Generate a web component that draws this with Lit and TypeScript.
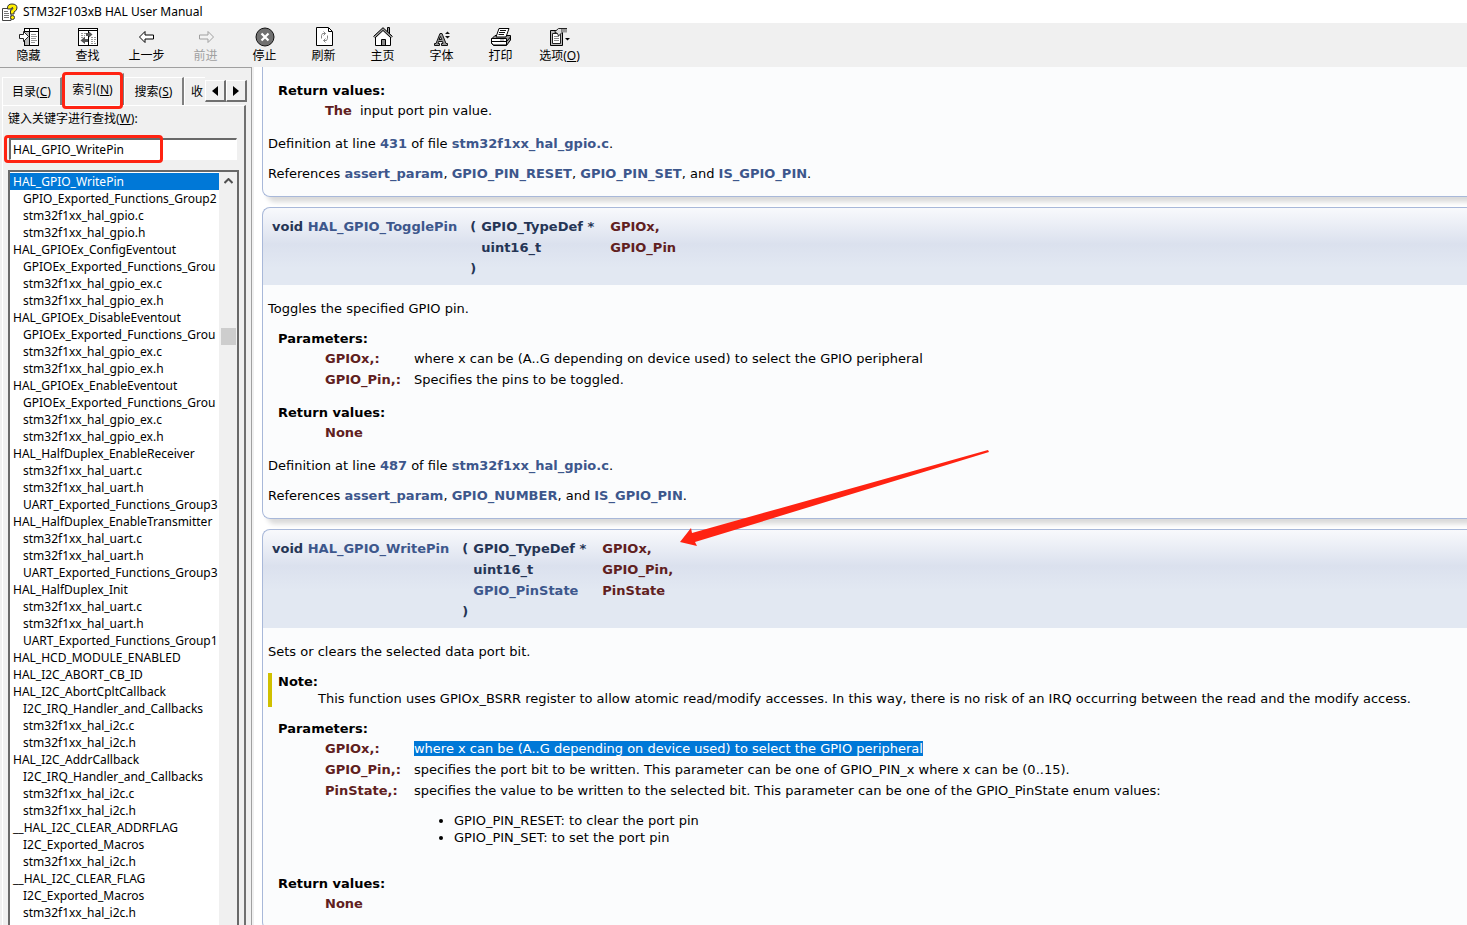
import { LitElement, html, css, svg } from "lit";
import { customElement, state } from "lit/decorators.js";

const hideIcon = svg`<rect x="5.500" y="1.500" width="14" height="17" fill="#fff" stroke="#000"/><rect x="6" y="5" width="4" height="13" fill="#bbb"/><path d="M10.500 2V18M6 4.500H19" stroke="#000"/><path d="M12 7.500H17M12 9.500H18M12 11.500H17M12 13.500H18M12 15.500H16" stroke="#999"/><path d="M0.500 7.500H4.500V4.500L9.500 9.500L4.500 14.500V11.500H0.500Z" fill="#fff" stroke="#222"/>`;
const findIcon = svg`<rect x=".5" y="1.500" width="19" height="17" fill="#fff" stroke="#000"/><path d="M1 3.500H19M10.500 4V18" stroke="#000"/><path d="M3 6.500H8M3 8.500H7M3 10.500H7M13 10.500H18M13 12.500H18M13 14.500H17M13 16.500H18" stroke="#999" stroke-dasharray="2 1"/><path d="M8 6H11V4.500L14.500 7.500L11 10.500V9H8Z" fill="#555"/><path d="M10 12H7V9.500L2.500 13.500L7 17V15H10Z" fill="#555"/>`;
const backIcon = svg`<path d="M16.500 8H8V4.500L2.500 10L8 15.500V12H16.500Z" fill="#fff" stroke="#000"/>`;
const forwardIcon = svg`<path d="M3.500 8H12V4.500L17.500 10L12 15.500V12H3.500Z" fill="#f3f3f3" stroke="#a0a0a0"/>`;
const stopIcon = svg`<circle cx="10" cy="10" r="9" fill="#707070" stroke="#111"/><path d="M6.500 6.500L13.500 13.500M13.500 6.500L6.500 13.500" stroke="#fff" stroke-width="2.200"/>`;
const refreshIcon = svg`<path d="M2.500 .5H14.500L18.500 4.500V18.500H2.500Z" fill="#fff" stroke="#000"/><path d="M14.500 1V4.500H18" fill="none" stroke="#000"/><path d="M7.500 11.500V8.500L8.500 6.500H11.500M9.500 4.500L11.500 6.500L9.500 8.500M13.500 8.500V11.500L12.500 13.500H9.500M11.500 11.500L9.500 13.500L11.500 15.500" fill="none" stroke="#888"/>`;
const homeIcon = svg`<path d="M14.500 6V.5H16.500V8" fill="#999" stroke="#000"/><path d="M2.500 10V18.500H17.500V10L10 3Z" fill="#fff" stroke="#000"/><path d="M1 10.500L10 2L19 10.500" fill="none" stroke="#999" stroke-width="2"/><path d="M.5 9.500L10 .7L19.500 9.500M2 11L10 3.500L18 11" fill="none" stroke="#000"/><path d="M8.500 18V12.500H12.500V18" fill="#888" stroke="#000"/>`;
const fontIcon = svg`<path d="M2.500 18.500V16.500H4L8 6.500H10L14 16.500H15.500V18.500H9.500V16.500H11L10.500 14.500H6.500L6 16.500H7.500V18.500ZM7 12.500H9.700L8.500 9.500Z" fill="#999" stroke="#111" fill-rule="evenodd"/><path d="M13 7L15.500 4.500L18 7ZM13 9L15.500 11.500L18 9Z" fill="#111"/>`;
const printIcon = svg`<path d="M.5 12L4 8.500H19.500V13L15.500 18.500H2.500L.5 16.500Z" fill="#999" stroke="#000"/><path d="M5 10L8 1.500H18L15 10Z" fill="#fff" stroke="#000"/><path d="M9 3.500H15M8 5.500H14M7.500 7.500H13" stroke="#111"/><path d="M.5 11.500H15.500V18H2.500L.5 16Z" fill="#fff" stroke="#000"/><path d="M1 14.500H15.500L19.500 10" fill="none" stroke="#000"/><path d="M9 13H13" stroke="#888"/>`;
const optionsIcon = svg`<path d="M.5 3.500H12.500V18.500H.5Z" fill="#bbb" stroke="#000"/><path d="M2.500 6.500H10.500V16.500H2.500Z" fill="#fff" stroke="#222"/><path d="M4 9.500H9M4 11.500H9M4 13.500H9" stroke="#888"/><path d="M4.500 5L8.500 1.500H12V5.500L8.500 9L7.500 6.500Z" fill="#ddd" stroke="#222"/><path d="M12 1H17V5.500H12Z" fill="#999"/><path d="M12 1.500H17" stroke="#222"/><path d="M15 11H20L17.500 13.500Z" fill="#000"/>`;

const TOOLS = [
  { label: "隐藏", icon: hideIcon },
  { label: "查找", icon: findIcon },
  { label: "上一步", icon: backIcon },
  { label: "前进", icon: forwardIcon, disabled: true },
  { label: "停止", icon: stopIcon },
  { label: "刷新", icon: refreshIcon },
  { label: "主页", icon: homeIcon },
  { label: "字体", icon: fontIcon },
  { label: "打印", icon: printIcon },
  { label: "选项", icon: optionsIcon, key: "O" },
];

// Leading ">" marks a topic nested below its keyword.
const INDEX = `HAL_GPIO_WritePin
>GPIO_Exported_Functions_Group2
>stm32f1xx_hal_gpio.c
>stm32f1xx_hal_gpio.h
HAL_GPIOEx_ConfigEventout
>GPIOEx_Exported_Functions_Grou
>stm32f1xx_hal_gpio_ex.c
>stm32f1xx_hal_gpio_ex.h
HAL_GPIOEx_DisableEventout
>GPIOEx_Exported_Functions_Grou
>stm32f1xx_hal_gpio_ex.c
>stm32f1xx_hal_gpio_ex.h
HAL_GPIOEx_EnableEventout
>GPIOEx_Exported_Functions_Grou
>stm32f1xx_hal_gpio_ex.c
>stm32f1xx_hal_gpio_ex.h
HAL_HalfDuplex_EnableReceiver
>stm32f1xx_hal_uart.c
>stm32f1xx_hal_uart.h
>UART_Exported_Functions_Group3
HAL_HalfDuplex_EnableTransmitter
>stm32f1xx_hal_uart.c
>stm32f1xx_hal_uart.h
>UART_Exported_Functions_Group3
HAL_HalfDuplex_Init
>stm32f1xx_hal_uart.c
>stm32f1xx_hal_uart.h
>UART_Exported_Functions_Group1
HAL_HCD_MODULE_ENABLED
HAL_I2C_ABORT_CB_ID
HAL_I2C_AbortCpltCallback
>I2C_IRQ_Handler_and_Callbacks
>stm32f1xx_hal_i2c.c
>stm32f1xx_hal_i2c.h
HAL_I2C_AddrCallback
>I2C_IRQ_Handler_and_Callbacks
>stm32f1xx_hal_i2c.c
>stm32f1xx_hal_i2c.h
__HAL_I2C_CLEAR_ADDRFLAG
>I2C_Exported_Macros
>stm32f1xx_hal_i2c.h
__HAL_I2C_CLEAR_FLAG
>I2C_Exported_Macros
>stm32f1xx_hal_i2c.h`.split("\n");

@customElement("index-pane")
export class IndexPane extends LitElement {
  @state() private selected = 0;

  static styles = css`
    :host { display: flex; flex-direction: column; min-height: 0; position: relative; font: 12px/17px "Noto Sans", "Noto Sans CJK SC", sans-serif; color: #000; background: #f0f0f0; border-top: 1px solid #a0a0a0; border-right: 1px solid #a0a0a0; padding: 3px 4px 0 2px; box-sizing: border-box; }
    button, input { font: inherit; color: inherit; margin: 0; border-radius: 0; }
    .tabs { display: flex; height: 34px; align-items: flex-end; flex: none; }
    .tab { flex: none; height: 28px; background: #f0f0f0; border: 1px solid #fff; border-right: 2px solid #808080; border-bottom: 0; padding: 0; width: 60px; white-space: nowrap; overflow: hidden; }
    .tab.on { height: 32px; width: 62px; }
    .tab.cut { flex: 1; min-width: 0; width: auto; text-align: left; padding-left: 6px; border-right: 0; }
    .arrow { flex: none; width: 21px; height: 22px; margin-bottom: 3px; padding: 0; background: #f0f0f0; border: 1px solid #fff; border-right: 2px solid #707070; border-bottom: 2px solid #707070; display: grid; place-items: center; }
    .page { flex: 1; min-height: 0; display: flex; flex-direction: column; border-top: 1px solid #fff; border-left: 1px solid #fff; border-right: 2px solid #707070; margin-right: 1px; padding: 4px 5px 0; }
    .label { height: 17px; white-space: nowrap; }
    .query { height: 22px; margin: 11px 2px 10px 1px; border: 1px solid #fff; border-top: 2px solid #696969; border-left: 2px solid #696969; padding: 0 2px; background: #fff; outline: 0; box-sizing: border-box; flex: none; }
    .box { flex: 1; min-height: 0; display: flex; border: 2px solid #696969; border-bottom: 0; background: #fff; overflow: hidden; }
    .list { flex: 1; min-width: 0; margin: 0; padding: 1px 0 0; list-style: none; overflow: hidden; }
    .item { display: block; width: 100%; height: 17px; border: 0; background: none; padding: 0 0 0 3px; text-align: left; white-space: nowrap; overflow: hidden; }
    .item.sub { padding-left: 13px; }
    .item.on { background: #0078d7; color: #fff; }
    .bar { width: 18px; flex: none; background: #f0f0f0; display: flex; flex-direction: column; align-items: center; }
    .up { width: 17px; height: 17px; border: 0; background: none; padding: 0; display: grid; place-items: center; }
    .thumb { width: 15px; height: 17px; background: #cdcdcd; margin-top: 139px; }
    .mark { position: absolute; box-sizing: border-box; border: 3px solid #ff2312; border-radius: 4px; pointer-events: none; }
    .mark.tabmark { left: 62px; top: 4px; width: 61px; height: 37px; }
    .mark.textmark { left: 4px; top: 67px; width: 159px; height: 28px; }
  `;

  render() {
    return html`
      <div class="tabs" role="tablist">
        <button class="tab" role="tab">目录(<u>C</u>)</button>
        <button class="tab on" role="tab" aria-selected="true">索引(<u>N</u>)</button>
        <button class="tab" role="tab">搜索(<u>S</u>)</button>
        <button class="tab cut" role="tab">收</button>
        <button class="arrow" aria-label="Previous tabs"><svg width="6" height="10"><path d="M6 0V10L0 5Z" /></svg></button>
        <button class="arrow" aria-label="Next tabs"><svg width="6" height="10"><path d="M0 0V10L6 5Z" /></svg></button>
      </div>
      <div class="page">
        <label class="label" for="query">键入关键字进行查找(<u>W</u>):</label>
        <input class="query" id="query" type="text" value="HAL_GPIO_WritePin" />
        <div class="box">
          <ul class="list">
            ${INDEX.map((name, i) => html`<li><button class="item ${name[0] === ">" ? "sub" : ""} ${i === this.selected ? "on" : ""}" @click=${() => (this.selected = i)}>${name.replace(">", "")}</button></li>`)}
          </ul>
          <div class="bar">
            <button class="up" aria-label="Scroll up"><svg width="9" height="6"><path d="M.5 5L4.500 1L8.500 5" fill="none" stroke="#505050" stroke-width="2" /></svg></button>
            <div class="thumb"></div>
          </div>
        </div>
      </div>
      <div class="mark tabmark"></div>
      <div class="mark textmark"></div>
    `;
  }
}

@customElement("manual-page")
export class ManualPage extends LitElement {
  static styles = css`
    :host { display: block; position: relative; overflow: hidden; background: #fff; font: 13px/17px Verdana, "DejaVu Sans", sans-serif; color: #000; border-left: 2px solid #f0f0f0; padding-left: 8px; }
    a { color: #3d578c; font-weight: bold; text-decoration: none; }
    p { margin: 0 0 13px; }
    .entry { margin-bottom: 10px; border-radius: 8px 0 0 8px; box-shadow: 5px 5px 5px rgba(0, 0, 0, 0.15); }
    .proto { border: 1px solid #a8b8d9; border-right: 0; border-bottom: 0; border-radius: 8px 0 0 0; background: linear-gradient(#f8f9fc 0, #dbe1ee 36px, #e2e8f2 60px); color: #253555; font-weight: bold; padding: 8px 9px 6px; }
    .sig { border-collapse: collapse; }
    .sig td { padding: 0; height: 21px; white-space: nowrap; }
    .sig .func { padding-right: 13px; }
    .sig .paren { padding-right: 5px; }
    .sig .type { padding-right: 16px; }
    .arg, .name { color: #602020; font-weight: bold; }
    .doc { border-left: 1px solid #a8b8d9; border-bottom: 1px solid #a8b8d9; border-radius: 0 0 0 8px; background: #fbfcfd; padding: 15px 5px 1px; }
    dl { margin: 0 0 12px; padding-left: 10px; }
    dt { font-weight: bold; }
    dd { margin: 0 0 0 47px; }
    .note { border-left: 4px solid #d0c000; padding-left: 6px; margin-bottom: 13px; }
    .note dd { margin-left: 40px; }
    .params { border-collapse: collapse; margin-top: 3px; }
    .params td { padding: 0 8px 4px 0; vertical-align: top; white-space: nowrap; }
    .params.wide .name { padding-right: 13px; }
    .picked { background: #0078d7; color: #fff; }
    .values { margin: 13px 0; padding-left: 40px; }
    .arrow { position: absolute; left: 424px; top: 380px; pointer-events: none; }
    .first { border-radius: 0 0 0 8px; }
    .last { margin-bottom: 0; }
  `;

  render() {
    return html`
      <section class="entry first">
        <div class="doc">
          <dl>
            <dt>Return values:</dt>
            <dd><table class="params"><tr><td class="name">The</td><td>input port pin value.</td></tr></table></dd>
          </dl>
          <p>Definition at line <a href="#l431">431</a> of file <a href="#src">stm32f1xx_hal_gpio.c</a>.</p>
          <p>References <a href="#a">assert_param</a>, <a href="#b">GPIO_PIN_RESET</a>, <a href="#c">GPIO_PIN_SET</a>, and <a href="#d">IS_GPIO_PIN</a>.</p>
        </div>
      </section>
      <section class="entry">
        <div class="proto">
          <table class="sig">
            <tr><td class="func">void <a href="#toggle">HAL_GPIO_TogglePin</a></td><td class="paren">(</td><td class="type">GPIO_TypeDef *</td><td class="arg">GPIOx,</td></tr>
            <tr><td></td><td></td><td class="type">uint16_t</td><td class="arg">GPIO_Pin</td></tr>
            <tr><td></td><td>)</td><td></td><td></td></tr>
          </table>
        </div>
        <div class="doc">
          <p>Toggles the specified GPIO pin.</p>
          <dl>
            <dt>Parameters:</dt>
            <dd><table class="params wide">
              <tr><td class="name">GPIOx,:</td><td>where x can be (A..G depending on device used) to select the GPIO peripheral</td></tr>
              <tr><td class="name">GPIO_Pin,:</td><td>Specifies the pins to be toggled.</td></tr>
            </table></dd>
          </dl>
          <dl>
            <dt>Return values:</dt>
            <dd><table class="params"><tr><td class="name">None</td></tr></table></dd>
          </dl>
          <p>Definition at line <a href="#l487">487</a> of file <a href="#src">stm32f1xx_hal_gpio.c</a>.</p>
          <p>References <a href="#a">assert_param</a>, <a href="#n">GPIO_NUMBER</a>, and <a href="#d">IS_GPIO_PIN</a>.</p>
        </div>
      </section>
      <section class="entry last">
        <div class="proto">
          <table class="sig">
            <tr><td class="func">void <a href="#write">HAL_GPIO_WritePin</a></td><td class="paren">(</td><td class="type">GPIO_TypeDef *</td><td class="arg">GPIOx,</td></tr>
            <tr><td></td><td></td><td class="type">uint16_t</td><td class="arg">GPIO_Pin,</td></tr>
            <tr><td></td><td></td><td class="type"><a href="#state">GPIO_PinState</a></td><td class="arg">PinState</td></tr>
            <tr><td></td><td>)</td><td></td><td></td></tr>
          </table>
        </div>
        <div class="doc">
          <p>Sets or clears the selected data port bit.</p>
          <dl class="note">
            <dt>Note:</dt>
            <dd>This function uses GPIOx_BSRR register to allow atomic read/modify accesses. In this way, there is no risk of an IRQ occurring between the read and the modify access.</dd>
          </dl>
          <dl>
            <dt>Parameters:</dt>
            <dd><table class="params wide">
              <tr><td class="name">GPIOx,:</td><td><span class="picked">where x can be (A..G depending on device used) to select the GPIO peripheral</span></td></tr>
              <tr><td class="name">GPIO_Pin,:</td><td>specifies the port bit to be written. This parameter can be one of GPIO_PIN_x where x can be (0..15).</td></tr>
              <tr><td class="name">PinState,:</td><td>specifies the value to be written to the selected bit. This parameter can be one of the GPIO_PinState enum values:
                <ul class="values"><li>GPIO_PIN_RESET: to clear the port pin</li><li>GPIO_PIN_SET: to set the port pin</li></ul></td></tr>
            </table></dd>
          </dl>
          <dl>
            <dt>Return values:</dt>
            <dd><table class="params"><tr><td class="name">None</td></tr></table></dd>
          </dl>
        </div>
      </section>
      <svg class="arrow" width="312" height="102" viewBox="0 0 312 102" aria-hidden="true"><path d="M310 3L311 5L17 95L19 99L2 95L13 81L14 86Z" fill="#ff2312" /></svg>
    `;
  }
}

@customElement("app-root")
export class AppRoot extends LitElement {
  static styles = css`
    :host { display: flex; flex-direction: column; height: 100vh; overflow: hidden; background: #fff; font: 12px/16px "Noto Sans", "Noto Sans CJK SC", sans-serif; color: #000; }
    .title { flex: none; display: flex; align-items: center; gap: 5px; height: 23px; padding-left: 2px; }
    .tools { flex: none; display: flex; height: 44px; background: #f0f0f0; }
    .tool { width: 59px; padding: 4px 2px 0 0; border: 0; background: none; font: inherit; color: inherit; display: flex; flex-direction: column; align-items: center; gap: 1px; white-space: nowrap; }
    .tool:disabled { color: #a0a0a0; }
    .body { flex: 1; min-height: 0; display: grid; grid-template-columns: 252px minmax(0, 1fr); }
  `;

  render() {
    return html`
      <header class="title">
        <svg width="16" height="18" viewBox="0 0 16 18" aria-hidden="true"><path d="M.5 5.500H9V17.500H.5Z" fill="#fff" stroke="#444" /><path d="M2 8.500H6M2 10.500H7M2 12.500H7M2 14.500H7" stroke="#777" /><path d="M5.500 5Q5.500 1 10 1Q15 1 15 5Q15 7.500 12 9V11H8.500V7.500Q11 6.500 11 5Q10 3.500 9 6H5.500Z" fill="#ffee00" stroke="#333" /><circle cx="10.500" cy="14.500" r="2" fill="#ffee00" stroke="#333" /></svg>
        <span>STM32F103xB HAL User Manual</span>
      </header>
      <nav class="tools">
        ${TOOLS.map((t) => html`<button class="tool" ?disabled=${t.disabled}><svg width="20" height="20" viewBox="0 0 20 20" aria-hidden="true">${t.icon}</svg><span>${t.label}${t.key ? html`(<u>${t.key}</u>)` : ""}</span></button>`)}
      </nav>
      <div class="body">
        <index-pane></index-pane>
        <manual-page></manual-page>
      </div>
    `;
  }
}
